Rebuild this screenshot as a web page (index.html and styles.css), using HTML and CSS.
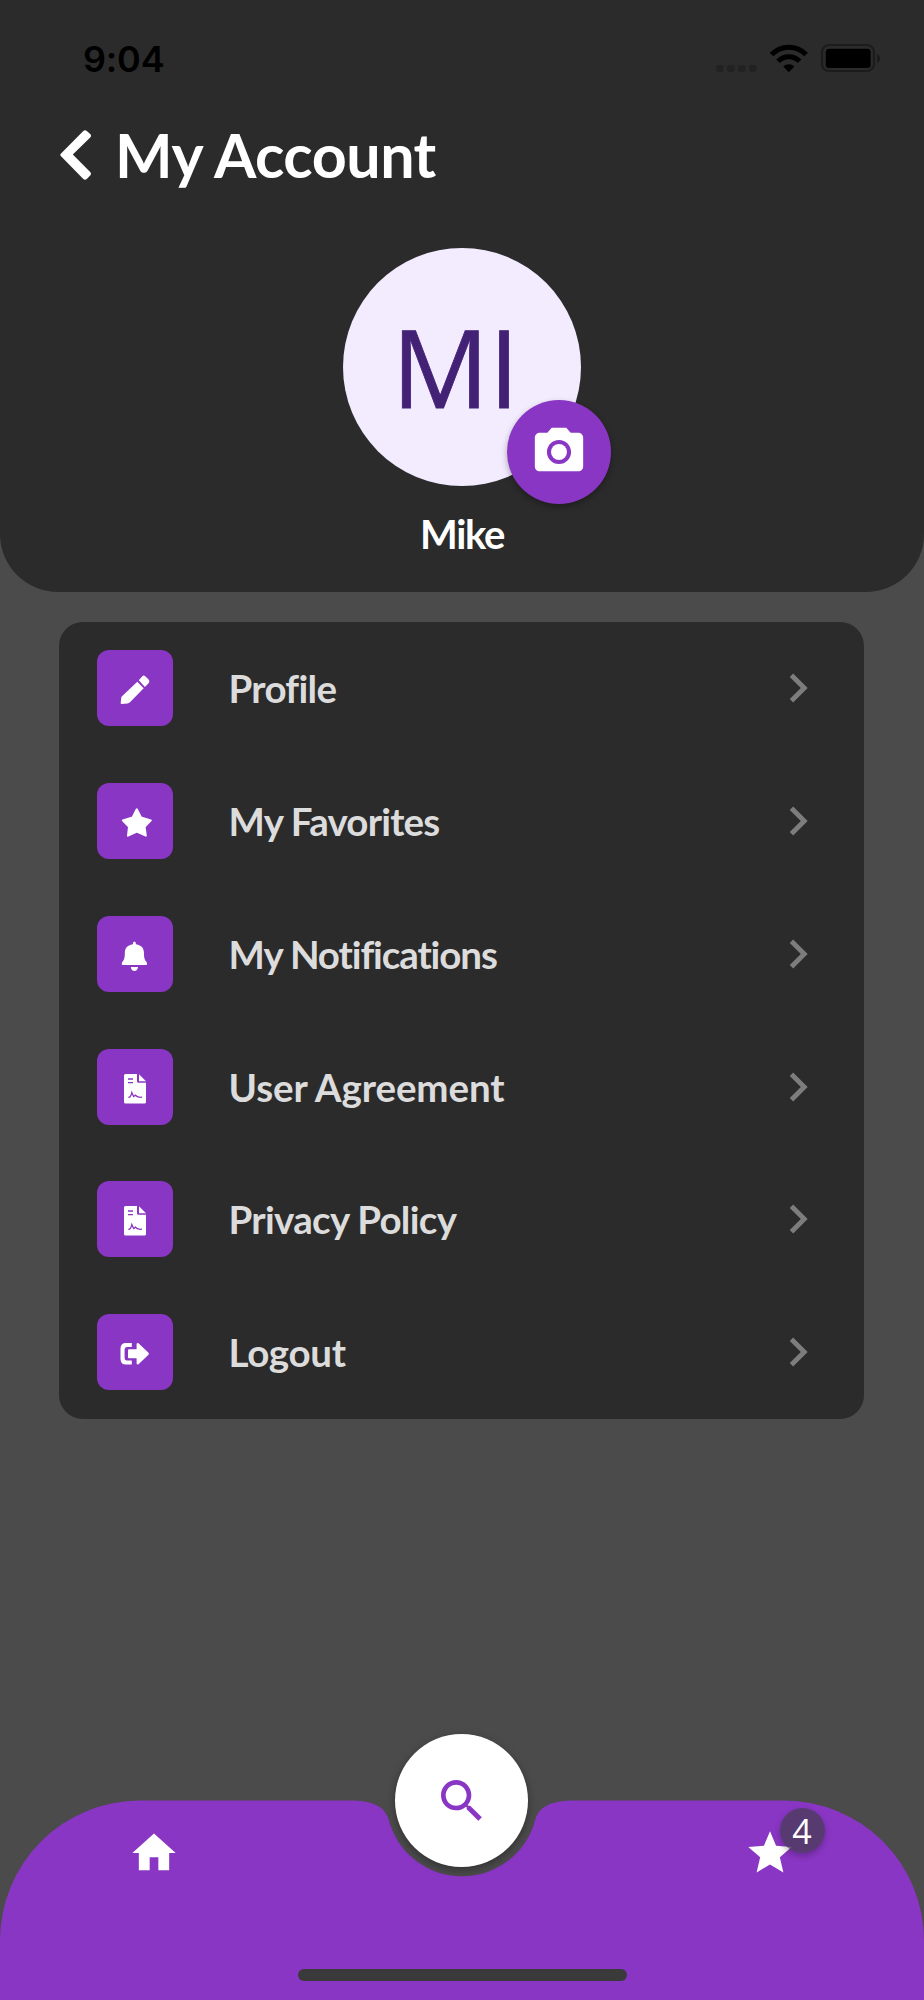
FILE: index.html
```
<!DOCTYPE html>
<html lang="en">
<head>
    <meta charset="UTF-8">
    <title>My Account</title>
    <link rel="stylesheet" href="styles.css">
</head>
<body>
    <header class="header">
        <div class="status-bar">
            <span class="clock">9:04</span>
            <svg class="status-icons" width="166" height="32" viewBox="0 0 166 32">
                <g fill="#222">
                    <rect x="0" y="23" width="7.5" height="7" rx="2.5"/>
                    <rect x="11" y="23" width="7.5" height="7" rx="2.5"/>
                    <rect x="22" y="23" width="7.5" height="7" rx="2.5"/>
                    <rect x="33" y="23" width="7.5" height="7" rx="2.5"/>
                </g>
                <g fill="none" stroke="#000" stroke-width="5">
                    <path d="M55.5 12.5a24 24 0 0 1 34.6 0"/>
                    <path d="M62 19.3a15 15 0 0 1 21.6 0"/>
                </g>
                <path d="M67.3 24.5a8 8 0 0 1 11 0L72.8 30.3z"/>
                <rect x="106" y="3" width="52" height="26" rx="7" fill="none" stroke="#1c1c1c" stroke-width="2.2"/>
                <rect x="109.7" y="6.7" width="45" height="19.2" rx="3.5"/>
                <path d="M161 12c4 1 4 8 0 9z" fill="#1a1a1a"/>
            </svg>
        </div>
        <div class="title-row">
            <svg class="back" width="32" height="50" viewBox="0 0 32 50">
                <path d="M.8 23.8 23.3 1Q25-.5 26.8 1L30.2 4Q31.8 5.7 30.2 7.5L12.8 24.5 30.2 42Q31.8 43.8 30.2 45.5L26.8 49Q25 50.3 23.3 49L.8 26Q-.2 24.8.8 23.8z" fill="#fff"/>
            </svg>
            <h1>My Account</h1>
        </div>
        <div class="avatar">
            <span class="initials">MI</span>
            <div class="camera">
                <svg width="58" height="58" viewBox="0 0 24 24" fill="#fff">
                    <circle cx="12" cy="12" r="3.3"/>
                    <path d="M9 2 7.17 4H4c-1.1 0-2 .9-2 2v12c0 1.1.9 2 2 2h16c1.1 0 2-.9 2-2V6c0-1.1-.9-2-2-2h-3.17L15 2H9zm3 15c-2.76 0-5-2.24-5-5s2.24-5 5-5 5 2.24 5 5-2.24 5-5 5z"/>
                </svg>
            </div>
        </div>
        <p class="name">Mike</p>
    </header>

    <ul class="menu">
        <li>
            <svg class="tile" viewBox="0 0 76 76">
                <path d="M40.3 31.7 46.7 38.3 33 52.3Q32 53.3 30.5 53.4L24.6 54Q23.7 54 23.7 53L24.2 48Q24.3 46.9 25 46.2z"/>
                <path d="M41.8 30.2 45.3 26.2Q46.7 24.8 48.2 26.2L51.6 29.6Q53.2 31.2 51.8 32.9L47.9 36.9z"/>
            </svg>
            <span class="profile">Profile</span>
            <svg class="chevron" viewBox="0 0 24 24"><path d="M10 6 8.59 7.41 13.17 12l-4.58 4.59L10 18l6-6z"/></svg>
        </li>
        <li>
            <svg class="tile" viewBox="0 0 76 76">
                <path d="M39.8 26.3 44 34.4 53.8 37.4 47.6 43.8 48.8 52.7 39.8 48.5 31 52.7 32 43.8 25.8 37.4 35.6 34.4z" stroke="#fff" stroke-width="2" stroke-linejoin="round"/>
            </svg>
            <span class="favorites">My Favorites</span>
            <svg class="chevron" viewBox="0 0 24 24"><path d="M10 6 8.59 7.41 13.17 12l-4.58 4.59L10 18l6-6z"/></svg>
        </li>
        <li>
            <svg class="tile" viewBox="0 0 76 76">
                <path d="M37.4 25.5Q39 25.5 39 28.3C44.7 29.2 47 32.6 47 37.5 47 42.6 48 44.4 49.7 46.2Q50.7 49 48.8 49H26Q24.1 49 25.1 46.2C26.8 44.4 27.8 42.6 27.8 37.5 27.8 32.6 30.1 29.2 35.8 28.3Q35.8 25.5 37.4 25.5z"/>
                <path d="M33.8 51H41Q40.4 55 37.4 55 34.4 55 33.8 51z"/>
            </svg>
            <span class="notifications">My Notifications</span>
            <svg class="chevron" viewBox="0 0 24 24"><path d="M10 6 8.59 7.41 13.17 12l-4.58 4.59L10 18l6-6z"/></svg>
        </li>
        <li>
            <svg class="tile" viewBox="0 0 76 76">
                <path d="M28.5 25H40V32.3Q40 33.8 41.5 33.8H49V53Q49 54.5 47.5 54.5H28.5Q27 54.5 27 53V26.5Q27 25 28.5 25z"/>
                <path d="M42 25.3 49 32.3H42z"/>
                <path class="ink" d="M31 30h5M31 33.6h5M31.4 48.2Q33.6 48.8 34.8 43.6L36.6 47.6 38.4 46.2Q40 48.8 45 48.2"/>
            </svg>
            <span class="agreement">User Agreement</span>
            <svg class="chevron" viewBox="0 0 24 24"><path d="M10 6 8.59 7.41 13.17 12l-4.58 4.59L10 18l6-6z"/></svg>
        </li>
        <li>
            <svg class="tile" viewBox="0 0 76 76">
                <path d="M28.5 25H40V32.3Q40 33.8 41.5 33.8H49V53Q49 54.5 47.5 54.5H28.5Q27 54.5 27 53V26.5Q27 25 28.5 25z"/>
                <path d="M42 25.3 49 32.3H42z"/>
                <path class="ink" d="M31 30h5M31 33.6h5M31.4 48.2Q33.6 48.8 34.8 43.6L36.6 47.6 38.4 46.2Q40 48.8 45 48.2"/>
            </svg>
            <span class="privacy">Privacy Policy</span>
            <svg class="chevron" viewBox="0 0 24 24"><path d="M10 6 8.59 7.41 13.17 12l-4.58 4.59L10 18l6-6z"/></svg>
        </li>
        <li>
            <svg class="tile" viewBox="0 0 76 76">
                <path d="M34.8 29H29Q23.5 29 23.5 34.5V45Q23.5 50.5 29 50.5H34.8V46.5H30Q27.6 46.5 27.6 44V35.5Q27.6 33 30 33H34.8z"/>
                <path d="M32 35.3H39.6V30Q40 28.5 41.5 29.3L51.5 38.8Q52.3 39.8 51.5 40.8L41.5 50.2Q40 51 39.6 49.5V44.2H32Q31 44.2 31 43.2V36.3Q31 35.3 32 35.3z"/>
            </svg>
            <span class="logout">Logout</span>
            <svg class="chevron" viewBox="0 0 24 24"><path d="M10 6 8.59 7.41 13.17 12l-4.58 4.59L10 18l6-6z"/></svg>
        </li>
    </ul>

    <nav class="bottom-nav">
        <!-- bar with a notch for the round search button -->
        <svg class="nav-shape" width="924" height="200" viewBox="0 0 924 200">
            <path d="M0 200V140.5A140 140 0 0 1 140 .5H350C370 .5 384 5 388.5 19A75.8 75.8 0 0 0 535.5 19C540 5 554 .5 574 .5H784A140 140 0 0 1 924 140.5V200z" fill="#8936c4"/>
        </svg>
        <div class="search">
            <svg width="56" height="56" viewBox="0 0 24 24" fill="#8936c4">
                <path d="M15.5 14h-.79l-.28-.27C15.41 12.59 16 11.11 16 9.5 16 5.91 13.09 3 9.5 3S3 5.91 3 9.5 5.91 16 9.5 16c1.61 0 3.09-.59 4.23-1.57l.27.28v.79l5 4.99L20.49 19l-4.99-5zm-6 0C7.01 14 5 11.99 5 9.5S7.01 5 9.5 5 14 7.01 14 9.5 11.99 14 9.5 14z"/>
            </svg>
        </div>
        <div class="tabs">
            <svg width="52" height="52" viewBox="0 0 24 24" fill="#fff"><path d="M10 20v-6h4v6h5v-8h3L12 3 2 12h3v8z"/></svg>
            <span></span>
            <div class="starred">
                <svg width="52" height="52" viewBox="0 0 24 24" fill="#fff"><path d="M12 17.27 18.18 21l-1.64-7.03L22 9.24l-7.19-.61L12 2 9.19 8.63 2 9.24l5.46 4.73L5.82 21z"/></svg>
                <span class="badge">4</span>
            </div>
        </div>
        <div class="home-indicator"></div>
    </nav>
</body>
</html>
```
FILE: styles.css
```
* {
  box-sizing: border-box;
}

body {
  margin: 0;
  height: 2000px;
  display: flex;
  flex-direction: column;
  background-color: #4b4b4b;
  color: #fff;
  font-family: Lato, sans-serif;
  font-variant-ligatures: none;
  overflow: hidden;
}

.header {
  height: 592px;
  background-color: #2b2b2b;
  border-radius: 0 0 58px 58px;
  display: flex;
  flex-direction: column;
  align-items: center;
}

.status-bar {
  width: 100%;
  height: 116px;
  padding: 0 42px 0 83px;
  display: flex;
  justify-content: space-between;
  align-items: center;
  color: #000;
}

.clock {
  font-family: Inter, sans-serif;
  font-weight: 600;
  font-size: 36px;
  letter-spacing: -0.2px;
  padding-top: 2px;
}

.title-row {
  width: 100%;
  height: 77px;
  padding-left: 60px;
  display: flex;
  align-items: center;
  gap: 23px;
}

h1 {
  margin: 0;
  font-size: 61px;
  font-weight: 700;
  line-height: 76px;
  letter-spacing: -0.5px;
}

.avatar {
  position: relative;
  width: 238px;
  height: 238px;
  margin-top: 55px;
  border-radius: 50%;
  background-color: #f3ecff;
  display: flex;
  align-items: center;
  justify-content: center;
}

.initials {
  padding-right: 13px;
  font-family: "Open Sans", sans-serif;
  font-size: 108px;
  line-height: 120px;
  color: #432275;
  -webkit-text-stroke: 0.8px #432275;
}

.camera {
  position: absolute;
  left: 164px;
  top: 152px;
  width: 104px;
  height: 104px;
  border-radius: 50%;
  background-color: #8936c4;
  box-shadow: 0 3px 6px rgba(0, 0, 0, 0.3);
  display: flex;
  align-items: center;
  justify-content: center;
}

.name {
  margin: 23px 0 0;
  font-size: 40px;
  font-weight: 700;
  line-height: 50px;
  letter-spacing: -1.3px;
}

.menu {
  list-style: none;
  margin: 30px 60px 0 59px;
  padding: 0;
  background-color: #2b2b2b;
  border-radius: 24px;
}

.menu li {
  height: 132.75px;
  padding: 0 37px 0 38px;
  display: flex;
  align-items: center;
  font-size: 38.5px;
  font-weight: 700;
  color: #dcdcdc;
}

.menu span {
  flex: 1;
  padding-left: 55.5px;
}

.profile {
  letter-spacing: -0.7px;
}

.favorites {
  letter-spacing: -0.8px;
}

.notifications {
  letter-spacing: -1.1px;
}

.agreement {
  letter-spacing: -0.1px;
}

.privacy {
  letter-spacing: -0.7px;
}

.logout {
  letter-spacing: -0.3px;
}

.tile {
  width: 76px;
  height: 76px;
  border-radius: 12px;
  background-color: #8936c4;
  fill: #fff;
}

.ink {
  fill: none;
  stroke: #8936c4;
  stroke-width: 1.3;
}

.chevron {
  width: 58px;
  height: 58px;
  fill: #7d7d7d;
}

.bottom-nav {
  position: relative;
  height: 200px;
  margin-top: auto;
  display: flex;
  flex-direction: column;
  align-items: center;
}

.nav-shape {
  position: absolute;
  left: 0;
  top: 0;
}

.search {
  position: absolute;
  left: 395px;
  top: -66px;
  width: 133px;
  height: 133px;
  border-radius: 50%;
  background-color: #fff;
  box-shadow: 0 3px 8px rgba(0, 0, 0, 0.35);
  display: flex;
  align-items: center;
  justify-content: center;
}

.tabs {
  position: relative;
  width: 100%;
  padding-top: 27px;
  display: grid;
  grid-template-columns: repeat(3, 1fr);
  justify-items: center;
}

.starred {
  position: relative;
  height: 52px;
}

.badge {
  position: absolute;
  left: 35.5px;
  top: -19px;
  width: 45px;
  height: 45px;
  border-radius: 50%;
  background-color: rgba(75, 60, 90, 0.8);
  box-shadow: 0 3px 6px rgba(0, 0, 0, 0.25);
  font-family: "Open Sans", sans-serif;
  font-size: 34px;
  line-height: 47px;
  text-align: center;
}

.home-indicator {
  position: relative;
  width: 329px;
  height: 12px;
  margin-top: auto;
  margin-bottom: 19px;
  border-radius: 6px;
  background-color: #3a3a3a;
}
```
